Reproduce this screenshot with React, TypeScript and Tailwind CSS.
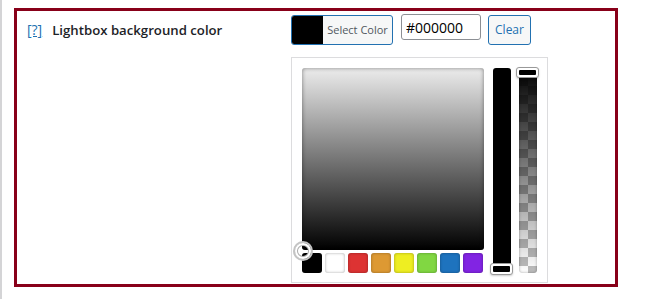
const swatches = ["#000000", "#ffffff", "#dd3333", "#dd9933", "#eeee22", "#81d742", "#1e73be", "#8224e3"]

export default function App() {
  return (
    <div className="flex h-[299px] w-[657px] bg-white font-['Segoe_UI','Open_Sans',sans-serif] text-[#1d2327]">
      <div className="w-[2px] bg-[#d4d4d6]" />
      <div className="ml-[12px] mt-[8px] flex h-[279px] w-[604px] border-[3px] border-[#880019]">
        <div className="flex w-[274px] items-start pl-[10px] pt-[10px] text-[14px] leading-[18px]">
          <a className="text-[#2271b1] underline">[?]</a>
          <span className="ml-[10px] text-[13.2px] font-semibold">Lightbox background color</span>
        </div>

        <div className="flex flex-col pt-[4px]">
          <div className="flex items-start">
            <button className="flex h-[30px] w-[102px] overflow-hidden rounded-[3px] border border-[#2271b1] bg-[#f6f7f7]">
              <span className="h-full w-[31px] bg-black" />
              <span className="flex-1 self-center text-center text-[11px] text-[#50575e]">Select Color</span>
            </button>
            <input
              readOnly
              value="#000000"
              className="-mt-[1px] ml-[8px] h-[26px] w-[80px] rounded-[3px] border border-[#8c8f94] px-[4px] text-[14px] text-black outline-none"
            />
            <button className="ml-[7px] h-[30px] w-[43px] rounded-[3px] border border-[#2271b1] bg-[#f6f7f7] text-[12px] text-[#2271b1]">
              Clear
            </button>
          </div>

          <div className="mt-[12px] flex h-[226px] w-[257px] border border-[#dcdcde] pl-[10px] pt-[10px]">
            <div className="flex flex-col">
              <div className="relative h-[182px] w-[182px] rounded-[3px] bg-[linear-gradient(to_bottom,#ececec,#000)] shadow-[inset_0_0_4px_rgba(0,0,0,0.45)]">
                <div className="absolute -bottom-[11px] -left-[9px] h-[20px] w-[20px] rounded-full border-[2px] border-[#c4c4c4] shadow-[inset_0_0_0_2px_#fff,inset_0_0_0_3px_#aaa]" />
              </div>
              <div className="mt-[3px] flex gap-[3px]">
                {swatches.map((c) => (
                  <div
                    key={c}
                    className="h-[20px] w-[20px] rounded-[3px] shadow-[inset_0_0_3px_rgba(0,0,0,0.35)]"
                    style={{ backgroundColor: c }}
                  />
                ))}
              </div>
            </div>

            <div className="relative ml-[9px] h-[202px] w-[18px] rounded-[3px] bg-black">
              <div className="absolute -left-[3px] top-[195px] h-[12px] w-[23px] rounded-[3px] border border-[#999] bg-white p-[2px] shadow-[0_1px_2px_rgba(0,0,0,0.2)]">
                <div className="h-full w-full rounded-[1px] bg-black" />
              </div>
            </div>

            <div className="relative ml-[8px] h-[205px] w-[18px] rounded-[3px] bg-[linear-gradient(to_bottom,#000,rgba(0,0,0,0)),conic-gradient(#bdbdbd_25%,#fff_0_50%,#bdbdbd_0_75%,#fff_0)] [background-size:100%_100%,18px_18px] shadow-[inset_0_0_3px_rgba(0,0,0,0.35)]">
              <div className="absolute -left-[3px] -top-[1px] h-[11px] w-[23px] rounded-[3px] border border-[#999] bg-white p-[2px] shadow-[0_1px_2px_rgba(0,0,0,0.2)]">
                <div className="h-full w-full rounded-[1px] bg-black" />
              </div>
            </div>
          </div>
        </div>
      </div>
    </div>
  )
}
